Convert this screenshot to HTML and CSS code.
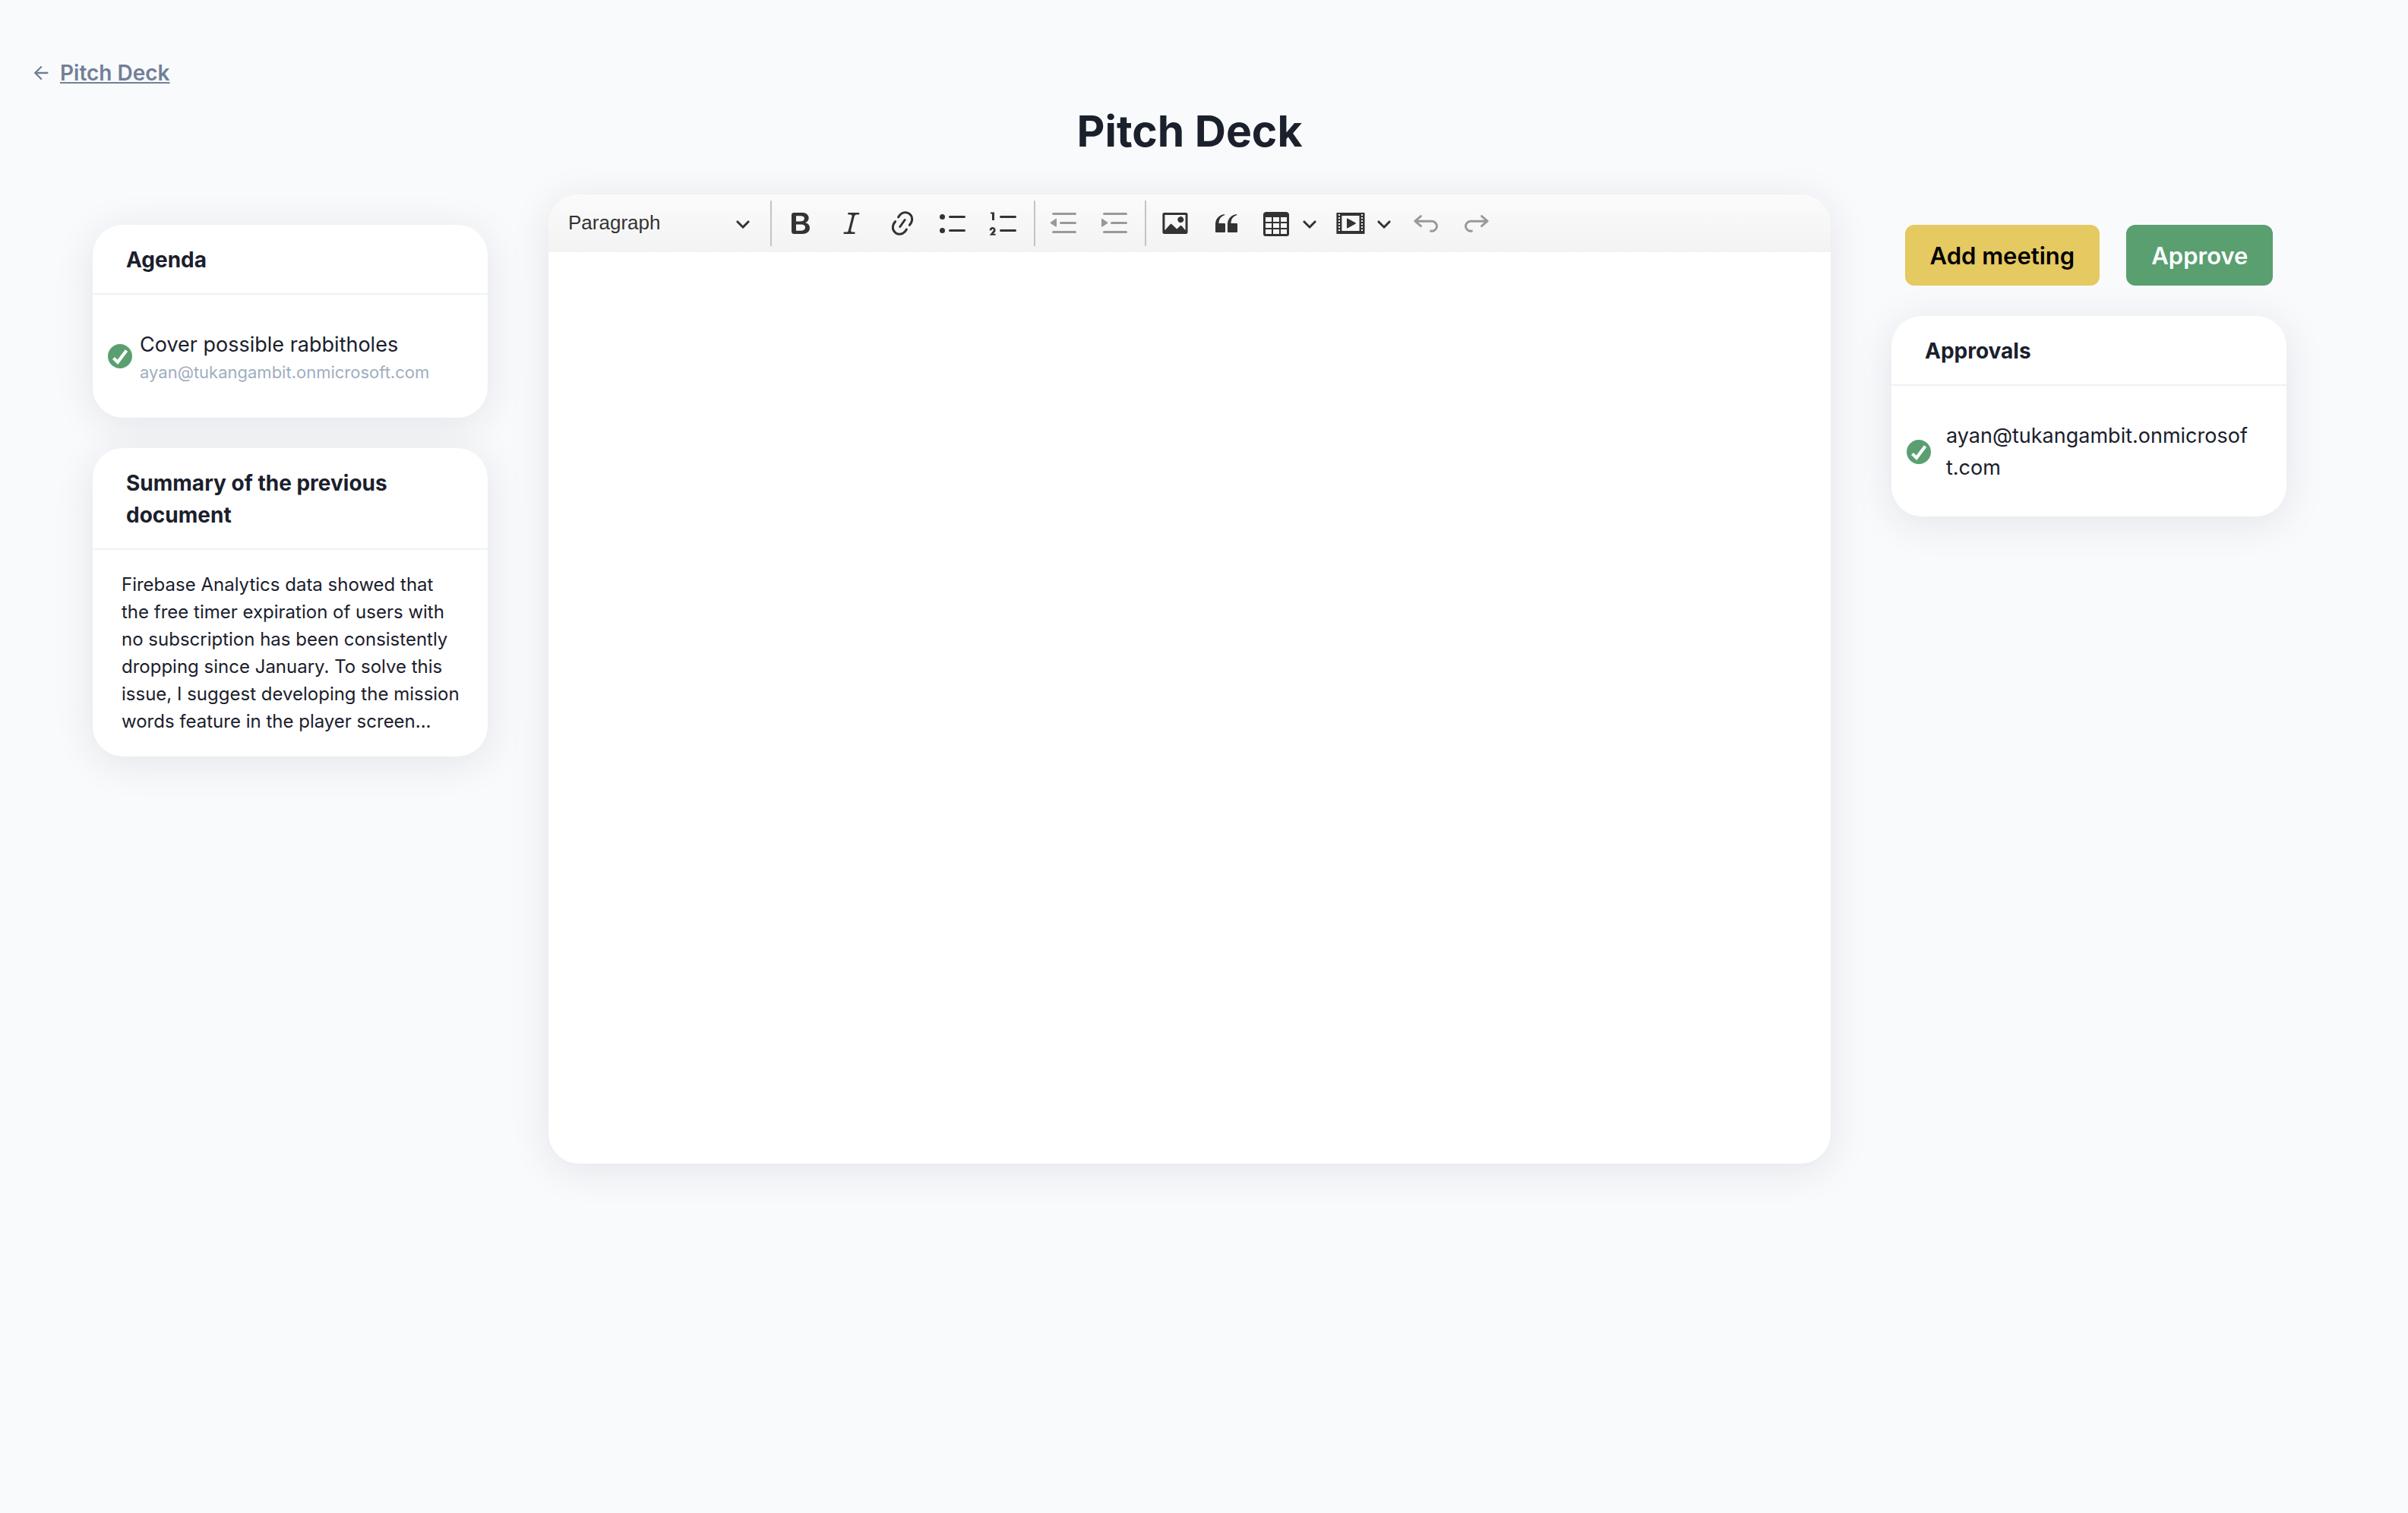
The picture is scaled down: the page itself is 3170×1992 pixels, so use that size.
FILE: index.html
```html
<!DOCTYPE html>
<html lang="en">
<head>
  <meta charset="utf-8">
  <meta name="viewport" content="width=device-width, initial-scale=1">
  <title>Pitch Deck</title>
  <link rel="stylesheet" href="styles.css">
</head>
<body>
  <svg class="sprite" aria-hidden="true">
    <symbol id="check" viewBox="0 0 32 32"><circle cx="16" cy="16" r="16"/><path d="M7.5 18.5l5.5 5.3L24.5 8.6" fill="none" stroke="#fff" stroke-width="4.2"/></symbol>
    <symbol id="chevron" viewBox="0 0 10 10"><path d="M.941 4.523a.75.75 0 1 1 1.06-1.06l3.006 3.005 3.005-3.005a.75.75 0 1 1 1.06 1.06l-3.549 3.55a.75.75 0 0 1-1.168-.136L.941 4.523z"/></symbol>
  </svg>

  <nav class="back">
    <svg class="back-icon" viewBox="0 0 24 24" aria-hidden="true"><path d="M20 11H7.83l5.59-5.59L12 4l-8 8 8 8 1.41-1.41L7.83 13H20v-2z"/></svg>
    <a class="back-link" href="#">Pitch Deck</a>
  </nav>

  <main class="page">
    <h1 class="page-title">Pitch Deck</h1>

    <div class="columns">
      <aside class="side">
        <section class="card">
          <h2 class="card-title">Agenda</h2>
          <div class="item">
            <svg class="check" role="img" aria-label="Done"><use href="#check"/></svg>
            <div class="item-text">
              <p class="item-name">Cover possible rabbitholes</p>
              <p class="item-owner">ayan@tukangambit.onmicrosoft.com</p>
            </div>
          </div>
        </section>
        <section class="card">
          <h2 class="card-title">Summary of the previous document</h2>
          <p class="summary">Firebase Analytics data showed that the free timer expiration of users with no subscription has been consistently dropping since January. To solve this issue, I suggest developing the mission words feature in the player screen...</p>
        </section>
      </aside>

      <section class="editor">
        <div class="toolbar" role="toolbar" aria-label="Editor toolbar">
          <div class="heading-picker">
            <select class="heading-select" aria-label="Heading">
              <option>Paragraph</option>
              <option>Heading 1</option>
              <option>Heading 2</option>
              <option>Heading 3</option>
            </select>
            <svg class="chevron heading-chevron" aria-hidden="true"><use href="#chevron"/></svg>
          </div>
          <span class="separator"></span>
          <button class="tool" type="button" aria-label="Bold"><svg class="icon" viewBox="0 0 20 20"><path d="M10.187 17H5.773c-.637 0-1.092-.138-1.364-.415-.273-.277-.409-.718-.409-1.323V4.738c0-.617.14-1.062.419-1.332.279-.27.73-.406 1.354-.406h4.68c.69 0 1.288.041 1.793.124.506.083.96.242 1.36.478.341.197.644.447.906.75a3.262 3.262 0 0 1 .808 2.162c0 1.401-.722 2.426-2.167 3.075C15.05 10.175 16 11.315 16 13.01a3.756 3.756 0 0 1-2.296 3.504 6.1 6.1 0 0 1-1.517.377c-.571.073-1.238.11-2 .11zm-.217-6.217H7v4.087h3.069c1.977 0 2.965-.69 2.965-2.072 0-.707-.256-1.22-.768-1.537-.512-.319-1.277-.478-2.296-.478zM7 5.13v3.619h2.606c.729 0 1.292-.067 1.69-.2a1.6 1.6 0 0 0 .91-.765c.165-.267.247-.566.247-.897 0-.707-.26-1.176-.778-1.409-.519-.232-1.31-.348-2.375-.348H7z"/></svg></button>
          <button class="tool" type="button" aria-label="Italic"><svg class="icon" viewBox="0 0 20 20"><path d="m9.586 14.633.021.004c-.036.335.095.655.393.962.082.083.173.15.274.201h1.474a.6.6 0 1 1 0 1.2H5.304a.6.6 0 0 1 0-1.2h1.15c.474-.07.809-.182 1.005-.334.157-.122.291-.32.404-.597l2.416-9.55a1.053 1.053 0 0 0-.281-.823 1.12 1.12 0 0 0-.442-.296H8.15a.6.6 0 0 1 0-1.2h6.443a.6.6 0 1 1 0 1.2h-1.195c-.376.056-.65.155-.823.296-.215.175-.423.439-.623.79l-2.366 9.347z"/></svg></button>
          <button class="tool" type="button" aria-label="Link"><svg class="icon" viewBox="0 0 20 20"><path d="m11.077 15 .991-1.416a.75.75 0 1 1 1.229.86l-1.148 1.64a.748.748 0 0 1-.217.206 5.251 5.251 0 0 1-8.503-5.955.741.741 0 0 1 .12-.274l1.147-1.639a.75.75 0 1 1 1.228.86L4.933 10.7l.006.003a3.75 3.75 0 0 0 6.132 4.294l.006.004zm5.494-5.335a.748.748 0 0 1-.12.274l-1.147 1.639a.75.75 0 1 1-1.228-.86l.86-1.23a3.75 3.75 0 0 0-6.144-4.301l-.86 1.229a.75.75 0 0 1-1.229-.86l1.148-1.64a.748.748 0 0 1 .217-.206 5.251 5.251 0 0 1 8.503 5.955zm-4.563-2.532a.75.75 0 0 1 .184 1.045l-3.155 4.505a.75.75 0 1 1-1.229-.86l3.155-4.506a.75.75 0 0 1 1.045-.184z"/></svg></button>
          <button class="tool" type="button" aria-label="Bulleted list"><svg class="icon" viewBox="0 0 20 20"><path d="M7 5.75c0 .414.336.75.75.75h9.5a.75.75 0 1 0 0-1.5h-9.5a.75.75 0 0 0-.75.75zM7 14.75c0 .414.336.75.75.75h9.5a.75.75 0 1 0 0-1.5h-9.5a.75.75 0 0 0-.75.75z"/><circle cx="2.75" cy="5.75" r="1.75"/><circle cx="2.75" cy="14.75" r="1.75"/></svg></button>
          <button class="tool" type="button" aria-label="Numbered list"><svg class="icon" viewBox="0 0 20 20"><path d="M7 5.75c0 .414.336.75.75.75h9.5a.75.75 0 1 0 0-1.5h-9.5a.75.75 0 0 0-.75.75zM3.5 3v5H2V3.7H1v-1h2.5V3zM.343 17.857l2.59-3.257H2.92a.6.6 0 1 0-1.04 0H.302a2 2 0 1 1 3.995 0h-.001c-.048.405-.16.734-.333.988-.175.254-.59.692-1.244 1.312H4.3v1h-4l.043-.043zM7 14.75a.75.75 0 0 1 .75-.75h9.5a.75.75 0 1 1 0 1.5h-9.5a.75.75 0 0 1-.75-.75z"/></svg></button>
          <span class="separator"></span>
          <button class="tool" type="button" aria-label="Decrease indent" disabled><svg class="icon" viewBox="0 0 20 20"><path d="M2 3.75c0 .414.336.75.75.75h14.5a.75.75 0 1 0 0-1.5H2.75a.75.75 0 0 0-.75.75zm5 6c0 .414.336.75.75.75h9.5a.75.75 0 1 0 0-1.5h-9.5a.75.75 0 0 0-.75.75zM2.75 16.5h14.5a.75.75 0 1 0 0-1.5H2.75a.75.75 0 1 0 0 1.5zm1.618-9.55L.98 9.358a.4.4 0 0 0 .013.661l3.39 2.207A.4.4 0 0 0 5 11.892V7.275a.4.4 0 0 0-.632-.326z"/></svg></button>
          <button class="tool" type="button" aria-label="Increase indent" disabled><svg class="icon" viewBox="0 0 20 20"><path d="M2 3.75c0 .414.336.75.75.75h14.5a.75.75 0 1 0 0-1.5H2.75a.75.75 0 0 0-.75.75zm5 6c0 .414.336.75.75.75h9.5a.75.75 0 1 0 0-1.5h-9.5a.75.75 0 0 0-.75.75zM2.75 16.5h14.5a.75.75 0 1 0 0-1.5H2.75a.75.75 0 1 0 0 1.5zM1.632 6.95 5.02 9.358a.4.4 0 0 1-.013.661l-3.39 2.207A.4.4 0 0 1 1 11.892V7.275a.4.4 0 0 1 .632-.326z"/></svg></button>
          <span class="separator"></span>
          <button class="tool" type="button" aria-label="Insert image"><svg class="icon" viewBox="0 0 20 20"><path d="M6.91 10.54c.26-.23.64-.21.88.03l3.36 3.14 2.23-2.06a.64.64 0 0 1 .87 0l2.52 2.97V4.5H3.2v10.12l3.71-4.08zm10.27-7.51c.6 0 1.09.47 1.09 1.05v11.84c0 .59-.49 1.06-1.09 1.06H2.79c-.6 0-1.09-.47-1.09-1.06V4.08c0-.58.49-1.05 1.1-1.05h14.38zm-5.22 5.56a1.96 1.96 0 1 1 3.4-1.96 1.96 1.96 0 0 1-3.4 1.96z"/></svg></button>
          <button class="tool" type="button" aria-label="Block quote"><svg class="icon" viewBox="0 0 20 20"><path d="M3 10.423a6.5 6.5 0 0 1 6.056-6.408l.038.67C6.448 5.423 5.354 7.663 5.22 10H9c.552 0 .5.432.5.986v4.511c0 .554-.448.503-1 .503h-5c-.552 0-.5-.449-.5-1.003v-4.574zm8 0a6.5 6.5 0 0 1 6.056-6.408l.038.67c-2.646.739-3.74 2.979-3.873 5.315H17c.552 0 .5.432.5.986v4.511c0 .554-.448.503-1 .503h-5c-.552 0-.5-.449-.5-1.003v-4.574z"/></svg></button>
          <button class="tool tool-menu" type="button" aria-label="Insert table" aria-haspopup="true"><svg class="icon" viewBox="0 0 20 20"><path d="M3 6v3h4V6H3zm0 4v3h4v-3H3zm0 4v3h4v-3H3zm5 3h4v-3H8v3zm5 0h4v-3h-4v3zm4-4v-3h-4v3h4zm0-4V6h-4v3h4zm1.5 8a1.5 1.5 0 0 1-1.5 1.5H3A1.5 1.5 0 0 1 1.5 17V4c.222-.863 1.068-1.5 2-1.5h13c.932 0 1.778.637 2 1.5v13zM12 13v-3H8v3h4zm0-4V6H8v3h4z"/></svg><svg class="chevron"><use href="#chevron"/></svg></button>
          <button class="tool tool-menu" type="button" aria-label="Insert media" aria-haspopup="true"><svg class="icon" viewBox="0 0 20 20"><path d="M18.68 3.03c.6 0 .59-.03.59.55v12.84c0 .59.01.56-.59.56H1.29c-.6 0-.59.03-.59-.56V3.58c0-.58-.01-.55.6-.55h17.38zM15.77 15V5H4.2v10h11.57zM2 4v1h1V4H2zm0 2v1h1V6H2zm0 2v1h1V8H2zm0 2v1h1v-1H2zm0 2v1h1v-1H2zm0 2v1h1v-1H2zM17 4v1h1V4h-1zm0 2v1h1V6h-1zm0 2v1h1V8h-1zm0 2v1h1v-1h-1zm0 2v1h1v-1h-1zm0 2v1h1v-1h-1zM7.5 7.177a.4.4 0 0 1 .593-.351l5.133 2.824a.4.4 0 0 1 0 .7l-5.133 2.824a.4.4 0 0 1-.593-.35V7.176v.001z"/></svg><svg class="chevron"><use href="#chevron"/></svg></button>
          <button class="tool" type="button" aria-label="Undo" disabled><svg class="icon" viewBox="0 0 20 20"><path d="m5.042 9.367 2.189 1.837a.75.75 0 0 1-.965 1.149l-3.788-3.18a.747.747 0 0 1-.21-.284.75.75 0 0 1 .17-.945L6.23 4.762a.75.75 0 1 1 .964 1.15L4.863 7.866h8.917A.75.75 0 0 1 14 7.9a4 4 0 1 1-1.477 7.718l.344-1.489a2.5 2.5 0 1 0 1.094-4.73l.008-.032H5.042z"/></svg></button>
          <button class="tool" type="button" aria-label="Redo" disabled><svg class="icon" viewBox="0 0 20 20"><path d="m14.958 9.367-2.189 1.837a.75.75 0 0 0 .965 1.149l3.788-3.18a.747.747 0 0 0 .21-.284.75.75 0 0 0-.17-.945L13.77 4.762a.75.75 0 1 0-.964 1.15l2.331 1.955H6.22A.75.75 0 0 0 6 7.9a4 4 0 1 0 1.477 7.718l-.344-1.489A2.5 2.5 0 1 1 6.039 9.4l-.008-.032h8.927z"/></svg></button>
        </div>
        <textarea class="editor-content" aria-label="Document content"></textarea>
      </section>

      <aside class="side">
        <div class="actions">
          <button class="button button-meeting" type="button">Add meeting</button>
          <button class="button button-approve" type="button">Approve</button>
        </div>
        <section class="card">
          <h2 class="card-title">Approvals</h2>
          <div class="item item-approval">
            <svg class="check" role="img" aria-label="Approved"><use href="#check"/></svg>
            <p class="approver">ayan@tukangambit.onmicrosoft.com</p>
          </div>
        </section>
      </aside>
    </div>
  </main>
</body>
</html>
```
FILE: styles.css
```css
* {
  box-sizing: border-box;
  margin: 0;
}

body {
  padding-top: 75px;
  background: #f9fafc;
  color: #1a202c;
  font-family: Inter, "Liberation Sans", sans-serif;
  font-size: 28px;
  line-height: 42px;
}

button,
select,
textarea {
  border: 0;
  padding: 0;
  background: none;
  color: inherit;
  font: inherit;
}

svg {
  flex: none;
  fill: currentColor;
}

.sprite {
  display: none;
}

/* Back link */

.back {
  display: flex;
  align-items: center;
  gap: 11px;
  padding-left: 40px;
  color: #718096;
}

.back-icon {
  width: 28px;
  height: 28px;
}

.back-link {
  color: inherit;
  font-weight: 600;
  text-decoration: underline;
}

/* Page frame */

.page {
  padding: 20px 160px 80px 122px;
}

.page-title {
  margin-bottom: 47px;
  font-size: 57px;
  line-height: 72px;
  font-weight: 700;
  text-align: center;
}

.columns {
  display: grid;
  grid-template-columns: 520px minmax(0, 1fr) 520px;
  align-items: start;
  gap: 80px;
}

.side {
  display: flex;
  flex-direction: column;
  gap: 40px;
  padding-top: 40px;
}

/* Cards */

.card,
.editor {
  border-radius: 40px;
  background: #fff;
  box-shadow: 0 8px 52px rgba(30, 35, 60, 0.1);
}

.card-title {
  padding: 25px 44px 23px;
  border-bottom: 2px solid #edf2f7;
  font-size: 28px;
  line-height: 42px;
  font-weight: 700;
}

.item {
  display: flex;
  align-items: center;
  gap: 10px;
  padding: 42px 20px;
}

.item-approval {
  gap: 20px;
  padding: 45px 40px 43px 20px;
}

.check {
  width: 32px;
  height: 32px;
  color: #5a9f70;
}

.item-text {
  padding-top: 6px;
  line-height: 36px;
}

.item-name,
.approver {
  font-size: 27px;
}

.item-owner {
  color: #a0aec0;
  font-size: 22px;
}

.approver {
  word-break: break-all;
}

.summary {
  padding: 28px 36px 28px 38px;
  font-size: 24px;
  line-height: 36px;
}

/* Editor */

.editor {
  display: flex;
  flex-direction: column;
  overflow: hidden;
}

.toolbar {
  display: flex;
  align-items: center;
  gap: 7px;
  padding: 8px 6px;
  background: linear-gradient(#fbfbfb, #f3f3f3);
  color: #333;
}

.heading-picker {
  position: relative;
  width: 277px;
}

.heading-select {
  width: 100%;
  height: 60px;
  padding: 0 50px 2px 20px;
  appearance: none;
  font-family: "Liberation Sans", Arial, sans-serif;
  font-size: 26px;
}

.heading-chevron {
  position: absolute;
  top: 20px;
  right: 17px;
  pointer-events: none;
}

.separator {
  width: 2px;
  height: 60px;
  margin: 0 1px 0 2px;
  background: #c4c4c4;
}

.tool {
  display: flex;
  align-items: center;
  justify-content: center;
  width: 60px;
  height: 60px;
}

.tool:disabled {
  color: #999;
}

.tool-menu {
  gap: 14px;
  width: 91px;
}

.icon {
  width: 40px;
  height: 40px;
}

.chevron {
  width: 20px;
  height: 20px;
}

.editor-content {
  display: block;
  width: 100%;
  height: 1200px;
  padding: 24px;
  outline: none;
  resize: none;
}

/* Actions */

.actions {
  display: flex;
  justify-content: space-around;
}

.button {
  height: 80px;
  padding: 1px 33px 0;
  border-radius: 12px;
  font-size: 31px;
  font-weight: 600;
}

.button-meeting {
  background: #e5c961;
  color: #000;
}

.button-approve {
  background: #5a9f70;
  color: #fff;
}
```
